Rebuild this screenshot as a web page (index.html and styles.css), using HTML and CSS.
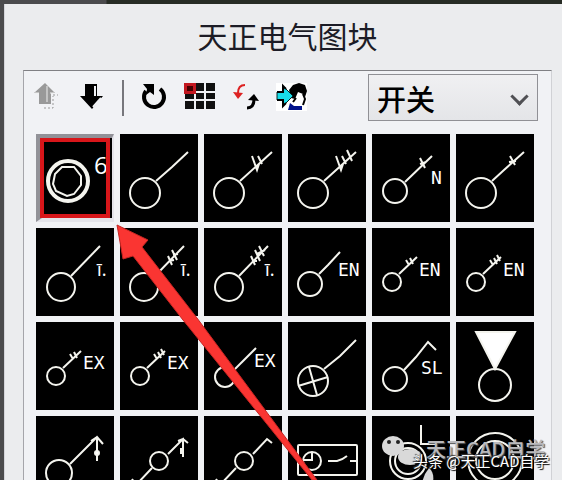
FILE: index.html
```
<!DOCTYPE html>
<html lang="zh-CN">
<head>
<meta charset="utf-8">
<title>天正电气图块</title>
<link rel="stylesheet" href="styles.css">
</head>
<body>
<main class="window">
  <h1 class="title">天正电气图块</h1>
  <section class="panel">
    <div class="toolbar">
      <button class="tool" aria-label="上一页"><svg viewBox="0 0 32 32"><path d="M15 1L25 11H21V22H9V11H4Z" fill="#999"/><path d="M17 4V20M5 11H9M20 11H24" stroke="#eee" stroke-width="1"/><path d="M23 13H28M14 26H23V14" fill="none" stroke="#999" stroke-width="1" stroke-dasharray="2 2"/></svg></button>
      <button class="tool" aria-label="下一页"><svg viewBox="0 0 32 32"><path d="M9 2H21V14H27L16 27L4 14H9Z" fill="#000"/><path d="M19 4V14M25 16L17 25" stroke="#f1f2f5" stroke-width="2"/></svg></button>
      <span class="divider"></span>
      <button class="tool" aria-label="旋转"><svg viewBox="0 0 32 32"><path d="M22 7A10 10 0 1 1 8 9" fill="none" stroke="#000" stroke-width="4"/><path d="M5 2H16V13L12 10L8 13L9 7Z"/></svg></button>
      <button class="tool" aria-label="行列布置"><svg viewBox="0 0 32 32"><path d="M1 1H31V27H1Z" fill="#111"/><path d="M11 1V27M21 1V27M1 10H31M1 18H31" stroke="#f1f2f5" stroke-width="2"/><path d="M0 1H12V12H0Z" fill="#c31820"/><path d="M3 4H9V9H3Z" fill="#400"/></svg></button>
      <button class="tool" aria-label="替换"><svg viewBox="0 0 32 32"><path d="M15 3C10 3 8 6 8 11" fill="none" stroke="#d22" stroke-width="2"/><path d="M3 10L13 11L8 17Z" fill="#d22"/><path d="M17 26C22 26 24 23 24 17" fill="none" stroke="#000" stroke-width="3"/><path d="M18 18L24 12L29 19Z"/></svg></button>
      <button class="tool" aria-label="选择"><svg viewBox="0 0 32 32"><path d="M0 1H31V29H0Z" fill="#fff"/><path d="M13 8L17 3L23 1L29 3L31 9L29 15L27 12L22 10L19 17L15 16Z" fill="#000"/><path d="M27 12L29 17L27 23M20 16L17 20" fill="none" stroke="#000" stroke-width="2"/><path d="M14 21L18 24H26V28H12Z" fill="#00128b"/><path d="M1 10H7V4L17 14L7 24V18H1Z" fill="#18dce8" stroke="#022" stroke-width="1"/><path d="M1 10H7V4L10 7M1 18H7V24L10 21" fill="none" stroke="#000" stroke-width="2"/></svg></button>
      <div class="picker"><select aria-label="图块类别"><option>开关</option></select></div>
    </div>

    <div class="grid">
      <button class="cell selected" aria-label="按钮"><svg viewBox="0 0 78 88"><circle cx="32" cy="47" r="20" stroke-width="4"/><path d="M26 33H38L45 42V51L38 60L31 62L20 57L17 50L19 40Z"/><text x="58" y="40" class="number">6</text></svg></button>
      <button class="cell" aria-label="单极开关"><svg viewBox="0 0 78 88"><circle cx="25" cy="59" r="15"/><path d="M36 47L52 33L68 18"/></svg></button>
      <button class="cell" aria-label="双极开关"><svg viewBox="0 0 78 88"><circle cx="25" cy="59" r="15"/><path d="M36 47L68 18M48 22L53 36L55 30M54 22L58 30"/></svg></button>
      <button class="cell" aria-label="三极开关"><svg viewBox="0 0 78 88"><circle cx="25" cy="59" r="15"/><path d="M36 47L68 18M48 22L53 36L55 30M54 22L58 30M59 16L64 27"/></svg></button>
      <button class="cell" aria-label="开关 N"><svg viewBox="0 0 78 88"><circle cx="23" cy="57" r="12"/><path d="M33 48L60 22M48 24L53 34M48 30L54 28"/><text x="59" y="50">N</text></svg></button>
      <button class="cell" aria-label="单极拉线开关"><svg viewBox="0 0 78 88"><circle cx="25" cy="59" r="15"/><path d="M36 47L48 36L68 18M54 22L59 31M53 28L60 27"/></svg></button>

      <button class="cell" aria-label="单极限时开关"><svg viewBox="0 0 78 88"><circle cx="25" cy="59" r="14"/><path d="M35 48L64 18"/><text x="61" y="48" class="timer">ī.</text></svg></button>
      <button class="cell" aria-label="双极限时开关"><svg viewBox="0 0 78 88"><circle cx="24" cy="59" r="14"/><path d="M35 48L64 18M48 28L52 37M52 22L57 32M49 33L54 32M53 27L58 26"/><text x="61" y="48" class="timer">ī.</text></svg></button>
      <button class="cell" aria-label="三极限时开关"><svg viewBox="0 0 78 88"><circle cx="25" cy="59" r="14"/><path d="M35 48L64 18M47 28L51 37M51 22L56 33M55 18L60 28M48 33L53 33M53 26L61 22"/><text x="61" y="48" class="timer">ī.</text></svg></button>
      <button class="cell" aria-label="密闭开关"><svg viewBox="0 0 78 88"><circle cx="22" cy="56" r="12"/><path d="M31 46L40 37L52 24"/><text x="50" y="48">EN</text></svg></button>
      <button class="cell" aria-label="双极密闭开关"><svg viewBox="0 0 78 88"><circle cx="20" cy="54" r="9"/><path d="M27 46L45 29M34 32L37 37M38 30L41 36"/><text x="47" y="48">EN</text></svg></button>
      <button class="cell" aria-label="三极密闭开关"><svg viewBox="0 0 78 88"><circle cx="20" cy="54" r="9"/><path d="M27 46L45 29M34 32L37 37M38 30L41 36M41 27L44 33"/><text x="47" y="48">EN</text></svg></button>

      <button class="cell" aria-label="双极防爆开关"><svg viewBox="0 0 78 88"><circle cx="20" cy="54" r="9"/><path d="M27 46L45 29M34 32L37 37M38 30L41 36"/><text x="47" y="47">EX</text></svg></button>
      <button class="cell" aria-label="三极防爆开关"><svg viewBox="0 0 78 88"><circle cx="20" cy="54" r="9"/><path d="M27 46L45 29M34 32L37 37M38 30L41 36M41 27L44 33"/><text x="47" y="47">EX</text></svg></button>
      <button class="cell" aria-label="单极防爆开关"><svg viewBox="0 0 78 88"><circle cx="21" cy="55" r="10"/><path d="M30 48L52 26"/><text x="50" y="45">EX</text></svg></button>
      <button class="cell" aria-label="带指示灯开关"><svg viewBox="0 0 78 88"><circle cx="25" cy="59" r="15"/><path d="M36 47L52 34L68 18M10 64L40 55M21 45L29 73"/></svg></button>
      <button class="cell" aria-label="声光开关"><svg viewBox="0 0 78 88"><circle cx="23" cy="57" r="12"/><path d="M32 48L44 35L56 20L64 28"/><text x="49" y="52">SL</text></svg></button>
      <button class="cell" aria-label="吊线开关"><svg viewBox="0 0 78 88"><circle cx="39" cy="63" r="16"/><path d="M20 10H59L39 47Z" class="solid"/></svg></button>

      <button class="cell" aria-label="拉线开关"><svg viewBox="0 0 78 88"><circle cx="23" cy="57" r="13"/><path d="M34 48L61 21L67 28M61 21V45M55 25L61 21"/><circle cx="61" cy="37" r="2" class="solid"/></svg></button>
      <button class="cell" aria-label="双控拉线开关"><svg viewBox="0 0 78 88"><circle cx="39" cy="45" r="9"/><path d="M48 38L63 23L68 27M58 25L63 23V41M61 32V38M32 52L16 69L12 63"/></svg></button>
      <button class="cell" aria-label="双控开关"><svg viewBox="0 0 78 88"><circle cx="40" cy="45" r="9"/><path d="M49 38L63 23L68 27M32 52L16 69L12 63"/></svg></button>
      <button class="cell" aria-label="定时开关"><svg viewBox="0 0 78 88"><rect x="10" y="29" width="59" height="30" rx="1"/><circle cx="24" cy="45" r="9"/><path d="M15 44H24V36M40 45H49Q54 44 59 40M62 45H69"/></svg></button>
      <button class="cell" aria-label="风机盘管开关"><svg viewBox="0 0 78 88"><circle cx="36" cy="45" r="18"/><circle cx="36" cy="45" r="13"/><path d="M49 9V28H65"/></svg></button>
      <button class="cell" aria-label="按钮盒"><svg viewBox="0 0 78 88"><circle cx="39" cy="44" r="27"/><circle cx="39" cy="44" r="19"/></svg></button>
    </div>
  </section>
</main>

<svg class="pointer" viewBox="0 0 562 480" aria-hidden="true"><path d="M117 225L148 240L142 247L197 318L317 480H312L183 320L133 256L123 259Z"/></svg>

<div class="watermark">
  <svg class="chat" viewBox="0 0 60 48" aria-hidden="true"><ellipse cx="12" cy="12" rx="11" ry="10"/><ellipse cx="29" cy="23" rx="12" ry="8"/><path d="M48 34C52 37 53 43 52 48H41L44 40Z"/><circle cx="8" cy="8" r="2" class="eye"/><circle cx="17" cy="8" r="2" class="eye"/></svg>
  <span class="account">天正CAD自学</span>
  <span class="credit">头条 @天正CAD自学</span>
</div>
</body>
</html>
```
FILE: styles.css
```
* { box-sizing: border-box; }

body {
  margin: 0;
  height: 100vh;
  overflow: hidden;
  position: relative;
  padding: 4px 0 0 4px;
  background: linear-gradient(90deg, #4b4b4d 0, #4b4b4d 106px, #272c25 107px);
  font-family: "Noto Sans", "Noto Sans CJK SC", sans-serif;
}

.window {
  height: 100%;
  overflow: hidden;
  padding: 0 10px 0 18px;
  background: #ebecee;
  border-left: 1px solid #d4d5da;
}

.title {
  margin: 0;
  height: 66px;
  line-height: 62px;
  text-align: center;
  font-family: "Noto Sans CJK SC", sans-serif;
  font-size: 30px;
  font-weight: 400;
  color: #1c1c26;
}

.panel {
  border: 1px solid #d0d1d5;
  border-top-color: #808084;
  border-left-color: #a5a5aa;
  background: #f1f2f5;
}

.toolbar {
  display: flex;
  align-items: center;
  gap: 14px;
  padding: 3px 13px 4px 6px;
}

.tool {
  width: 32px;
  height: 32px;
  padding: 0;
  border: 0;
  background: none;
}

.tool svg, .cell svg { display: block; width: 100%; }

.divider {
  width: 2px;
  height: 36px;
  background: #77777c;
}

.picker { margin-left: auto; position: relative; }

.picker::after {
  content: "";
  position: absolute;
  right: 12px;
  top: 16px;
  width: 10px;
  height: 10px;
  border: solid #505054;
  border-width: 0 3px 3px 0;
  transform: rotate(45deg);
  pointer-events: none;
}

.picker select {
  display: block;
  width: 170px;
  height: 47px;
  padding: 0 8px;
  appearance: none;
  border: 1px solid #909095;
  border-radius: 0;
  background: linear-gradient(#f0f0f2, #e4e5e8);
  color: #000;
  font: 500 29px "Noto Sans CJK SC", sans-serif;
}

.grid {
  display: grid;
  grid-template-columns: repeat(6, 1fr);
  gap: 6px;
  padding: 9px 17px 6px 12px;
}

.cell {
  display: block;
  padding: 0;
  border: 0;
  background: #000;
}

.cell svg {
  fill: none;
  stroke: #f4f4ee;
  stroke-width: 2;
}

.cell .solid { fill: #fff; }

.cell text {
  fill: #fff;
  stroke: none;
  font: 18px "DejaVu Sans Mono", monospace;
}

.cell .number { font: 24px "Open Sans", sans-serif; }
.cell .timer { font: 18px "Noto Sans", sans-serif; }

.selected { position: relative; }

.selected::after {
  content: "";
  position: absolute;
  inset: 0;
  border: solid #e4e4ea;
  border-width: 4px 2px 4px 6px;
  border-top-color: #929298;
  border-left-color: #929298;
  outline: 4px solid #d8161a;
  outline-offset: -8px;
  box-shadow: inset 2px 0 #000;
}

.pointer {
  position: absolute;
  top: 0;
  left: 0;
  width: 562px;
  height: 480px;
  fill: #fa3532;
  stroke: #c42522;
  pointer-events: none;
}

.watermark {
  position: absolute;
  left: 381px;
  top: 434px;
  display: grid;
  white-space: nowrap;
  pointer-events: none;
  font-family: "Noto Sans CJK SC", sans-serif;
}

.watermark > * { grid-area: 1 / 1; }

.chat { width: 60px; height: 48px; fill: #d9d9d9; }
.chat .eye { fill: #222; }

.account {
  padding-left: 45px;
  font-size: 20px;
  font-weight: 500;
  line-height: 30px;
  color: #b9b9bc;
  text-shadow: 1px 1px 1px #555;
}

.credit {
  padding: 16px 0 0 32px;
  font-size: 15px;
  line-height: 22px;
  color: #fff;
  text-shadow: 1px 1px 1px #000, -1px -1px 1px #333;
}
```
